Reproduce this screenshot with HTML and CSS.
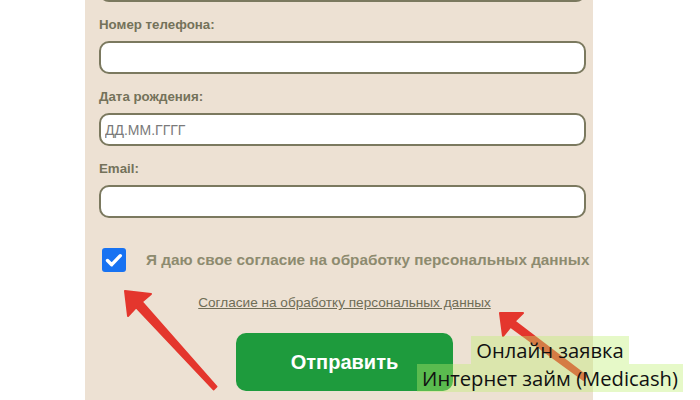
FILE: index.html
```html
<!DOCTYPE html>
<html lang="ru">
<head>
<meta charset="utf-8">
<title>Онлайн заявка</title>
<link rel="stylesheet" href="styles.css">
</head>
<body>
<div class="page">
  <form class="panel">
    <input class="input" type="text">
    <label class="label">Номер телефона:</label>
    <input class="input" type="text">
    <label class="label">Дата рождения:</label>
    <input class="input" type="text" placeholder="ДД.ММ.ГГГГ">
    <label class="label">Email:</label>
    <input class="input" type="text">
    <div class="consent">
      <span class="check">
        <svg viewBox="0 0 24 24" width="24" height="24"><path d="M5.5 12.5l4.2 4.2 8.6-9" fill="none" stroke="#fff" stroke-width="3.4" stroke-linecap="round" stroke-linejoin="round"/></svg>
      </span>
      <span class="consent-text">Я даю свое согласие на обработку персональных данных</span>
    </div>
    <div class="link-row"><a class="link" href="#">Согласие на обработку персональных данных</a></div>
    <div class="btn-row"><button class="submit" type="button">Отправить</button></div>
  </form>
  <svg class="arrows" viewBox="0 0 700 400" width="700" height="400">
    <polygon points="125,291 151,294 141.9,301.8 216.5,386.6 213.5,389.4 136.1,307.2 128,316" fill="#e4362d" stroke="#e4362d" stroke-width="2" stroke-linejoin="round"/>
    <polygon points="500,313 523,313 514.6,321.2 586.5,376 583.5,380 510.4,326.8 503,336" fill="#e4362d" stroke="#e4362d" stroke-width="2" stroke-linejoin="round"/>
  </svg>
  <div class="caption">
    <span class="cap">Онлайн заявка</span><br>
    <span class="cap">Интернет займ (Medicash)</span>
  </div>
</div>
</body>
</html>
```

FILE: styles.css
```css
html, body {
  margin: 0;
  padding: 0;
  background: #ffffff;
}

.page {
  position: relative;
  width: 700px;
  height: 400px;
  overflow: hidden;
}

.panel {
  box-sizing: border-box;
  width: 508px;
  margin: -31px 0 0 85px;
  padding: 0 3px 40px 14px;
  background: #ede1d3;
  font-family: "Liberation Sans", Arial, sans-serif;
  display: flex;
  flex-direction: column;
  align-items: flex-start;
}

.label {
  display: block;
  font-size: 13.3px;
  line-height: 16px;
  font-weight: bold;
  color: #74725a;
  margin: 0 0 8px;
}

.input {
  box-sizing: border-box;
  width: 487px;
  height: 33px;
  margin: 0 0 15px;
  padding: 0 4px;
  border: 2px solid #7b795f;
  border-radius: 10px;
  background: #ffffff;
  font-family: "Liberation Sans", Arial, sans-serif;
  font-size: 14px;
  color: #333;
  outline: none;
}

.input::placeholder {
  color: #7a7a7a;
}

.consent {
  display: flex;
  align-items: center;
  gap: 20px;
  margin: 15px 0 0 3px;
  height: 24px;
}

.check {
  width: 24px;
  height: 24px;
  border-radius: 3px;
  background: #1772f2;
  display: flex;
}

.consent-text {
  font-size: 15.3px;
  font-weight: bold;
  color: #8d8b6f;
  white-space: nowrap;
}

.link-row {
  align-self: stretch;
  text-align: center;
  margin-top: 22px;
  line-height: 16px;
}

.link {
  font-size: 13.6px;
  color: #6f6d56;
  text-decoration: underline;
}

.btn-row {
  align-self: stretch;
  display: flex;
  justify-content: center;
  margin-top: 22px;
}

.submit {
  width: 217px;
  height: 58px;
  border: none;
  border-radius: 10px;
  background: #1e9b3d;
  color: #ffffff;
  font-family: "Liberation Sans", Arial, sans-serif;
  font-size: 20px;
  font-weight: bold;
}

.arrows {
  position: absolute;
  left: 0;
  top: 0;
  pointer-events: none;
}

.caption {
  position: absolute;
  left: 400px;
  top: 336px;
  width: 300px;
  text-align: center;
  font-family: "Open Sans", sans-serif;
  font-size: 20.2px;
  line-height: 28px;
  color: #111111;
}

.cap {
  display: inline-block;
  padding: 0 5px;
  background: rgba(190, 240, 110, 0.38);
}
```
